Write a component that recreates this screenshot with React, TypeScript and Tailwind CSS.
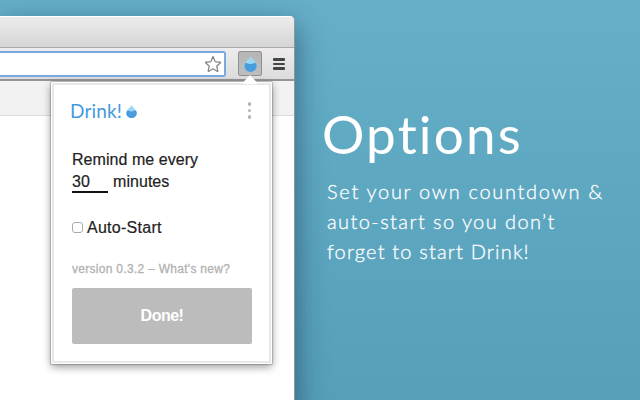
import React from 'react';

interface DropIconProps {
  className?: string;
}

const DropIcon: React.FC<DropIconProps> = ({ className }) => (
  <svg className={className} viewBox="0 0 12 16" preserveAspectRatio="none">
    <path d="M6 0C7 3 11.800 6 11.800 10.200a5.800 5.800 0 0 1-11.600 0C.2 6 5 3 6 0z" fill="#9bd8f5" />
    <path d="M1.200 7C3 6.400 4.300 8.300 6.500 7.900 8.500 7.600 9.500 6.300 11 7.200c2.200 4.400-1 8.800-5 8.800S-1 11.400 1.200 7z" fill="#4a9ddb" />
  </svg>
);

const Toolbar = () => (
  <div className="flex h-[33px] items-start border-b-2 border-[#989495] bg-linear-to-b from-[#eeeced] to-[#dcdcdc] pt-[3px]">
    {/* Address bar */}
    <div className="flex h-[26px] w-[226px] items-center justify-end rounded-r-[3px] border-2 border-l-0 border-[#79a9e2] bg-white pr-[2px]">
      <svg className="h-[18px] w-[18px]" viewBox="0 0 18 18" fill="#fff" stroke="#858585" strokeWidth="1.3" strokeLinejoin="round">
        <path d="M9 1.500l2 4.700q.3.600.9.600l4.100.3q1 .2.200.9l-3.100 2.700q-.5.500-.3 1l1 4q.1.900-.7.500L9 13.800l-4.100 2.400q-.8.400-.7-.5l1-4q.2-.5-.3-1L1.800 8q-.8-.7.200-.9l4.100-.3q.6 0 .9-.6z" />
      </svg>
    </div>
    {/* Extension button */}
    <div className="ml-3 flex h-[25px] w-[24px] items-center justify-center rounded-[2px] border border-[#919191] bg-linear-to-b from-[#b5b5b5] to-[#bebebe]">
      <DropIcon className="h-4 w-[13px]" />
    </div>
    <div className="mt-[7px] ml-[11px] flex flex-col gap-[2px]">
      <span className="h-[2.500px] w-3 rounded-[1px] bg-[#454545]" />
      <span className="h-[2.500px] w-3 rounded-[1px] bg-[#454545]" />
      <span className="h-[2.500px] w-3 rounded-[1px] bg-[#454545]" />
    </div>
  </div>
);

const Popup = () => (
  <div className="absolute top-[82px] left-[51px] h-[282px] w-[221px] rounded-[1px] border border-white bg-white font-['Liberation_Sans',sans-serif] shadow-[0_0_1px_1px_rgba(0,0,0,0.2),0_3px_9px_rgba(0,0,0,0.4)]">
    {/* Arrow pointing at the extension button */}
    <svg className="absolute -top-[9px] left-[191px] h-[10px] w-[14px]" viewBox="0 0 14 10">
      <path d="M0 10V8.500L7 1l7 7.500V10z" fill="#fff" />
    </svg>
    <div className="h-full border-2 border-[#e8e8e8] px-[18px] pt-[15px] text-[#222]">
      <div className="flex h-[24px] items-start justify-between">
        <div className="-ml-[2px] flex items-start">
          <h1 className="w-[56px] font-['Lato',sans-serif] text-[19px] leading-[22px] tracking-[0.150px] text-[#459add]">Drink!</h1>
          <DropIcon className="mt-[5px] h-[13px] w-[11px]" />
        </div>
        <div className="mt-[2px] flex flex-col gap-[3px]">
          <span className="h-[3.500px] w-[3.500px] rounded-full bg-[#b4b4b4]" />
          <span className="h-[3.500px] w-[3.500px] rounded-full bg-[#b4b4b4]" />
          <span className="h-[3.500px] w-[3.500px] rounded-full bg-[#b4b4b4]" />
        </div>
      </div>
      <div className="mt-[24px] text-base tracking-[0.050px] whitespace-nowrap [-webkit-text-stroke:0.2px_#222]">
        <p className="leading-[23px]">Remind me every</p>
        <p className="flex h-[23px] leading-[21px]">
          <span className="mr-[5px] h-[22px] w-[36px] border-b-2 border-[#111]">30</span>
          minutes
        </p>
      </div>
      <label className="mt-[22px] flex h-[23px] items-center text-base tracking-[0.270px] [-webkit-text-stroke:0.2px_#222]">
        <span className="mr-[4px] h-[11px] w-[11px] rounded-[3px] border border-[#aaa] bg-white" />
        Auto-Start
      </label>
      <p className="mt-[22px] text-[12px] leading-4 tracking-[0.290px] text-[#b2b2b2] [-webkit-text-stroke:0.3px_#b2b2b2]">
        version 0.3.2 – What's new?
      </p>
      <button className="mt-[11px] h-[56px] w-[180px] rounded-[2px] bg-[#bcbcbc] text-base font-bold tracking-[-0.500px] text-white">
        Done!
      </button>
    </div>
  </div>
);

const App = () => (
  <div className="flex h-[400px] w-[640px] overflow-hidden bg-linear-to-b from-[#66afc9] to-[#569fb9]">
    {/* Browser window */}
    <div className="relative w-[295px] shrink-0 pt-4">
      <div className="h-[400px] overflow-hidden rounded-tr-[5px] border-r border-[#8b999f] bg-white shadow-[0_10px_30px_rgba(0,30,45,0.5)]">
        <div className="h-8 border-t border-b border-t-white border-b-[#aaa] bg-linear-to-b from-[#ececec] to-[#d5d5d5]" />
        <Toolbar />
        <div className="h-[35px] border-b border-[#dcdcdc] bg-[#f2f2f2]" />
      </div>
      <Popup />
    </div>
    {/* Caption */}
    <div className="relative pt-[104px] pl-[27px] font-['Lato',sans-serif] whitespace-nowrap text-white">
      <h2 className="text-[53px] leading-[60px] tracking-[2.200px]">Options</h2>
      <p className="mt-[12px] ml-[5px] flex flex-col text-[20px] leading-[30px] font-light [-webkit-text-stroke:0.3px_white]">
        <span className="tracking-[1.690px]">Set your own countdown &amp;</span>
        <span className="tracking-[1.420px]">auto-start so you don’t</span>
        <span className="tracking-[1.180px]">forget to start Drink!</span>
      </p>
    </div>
  </div>
);

export default App;
